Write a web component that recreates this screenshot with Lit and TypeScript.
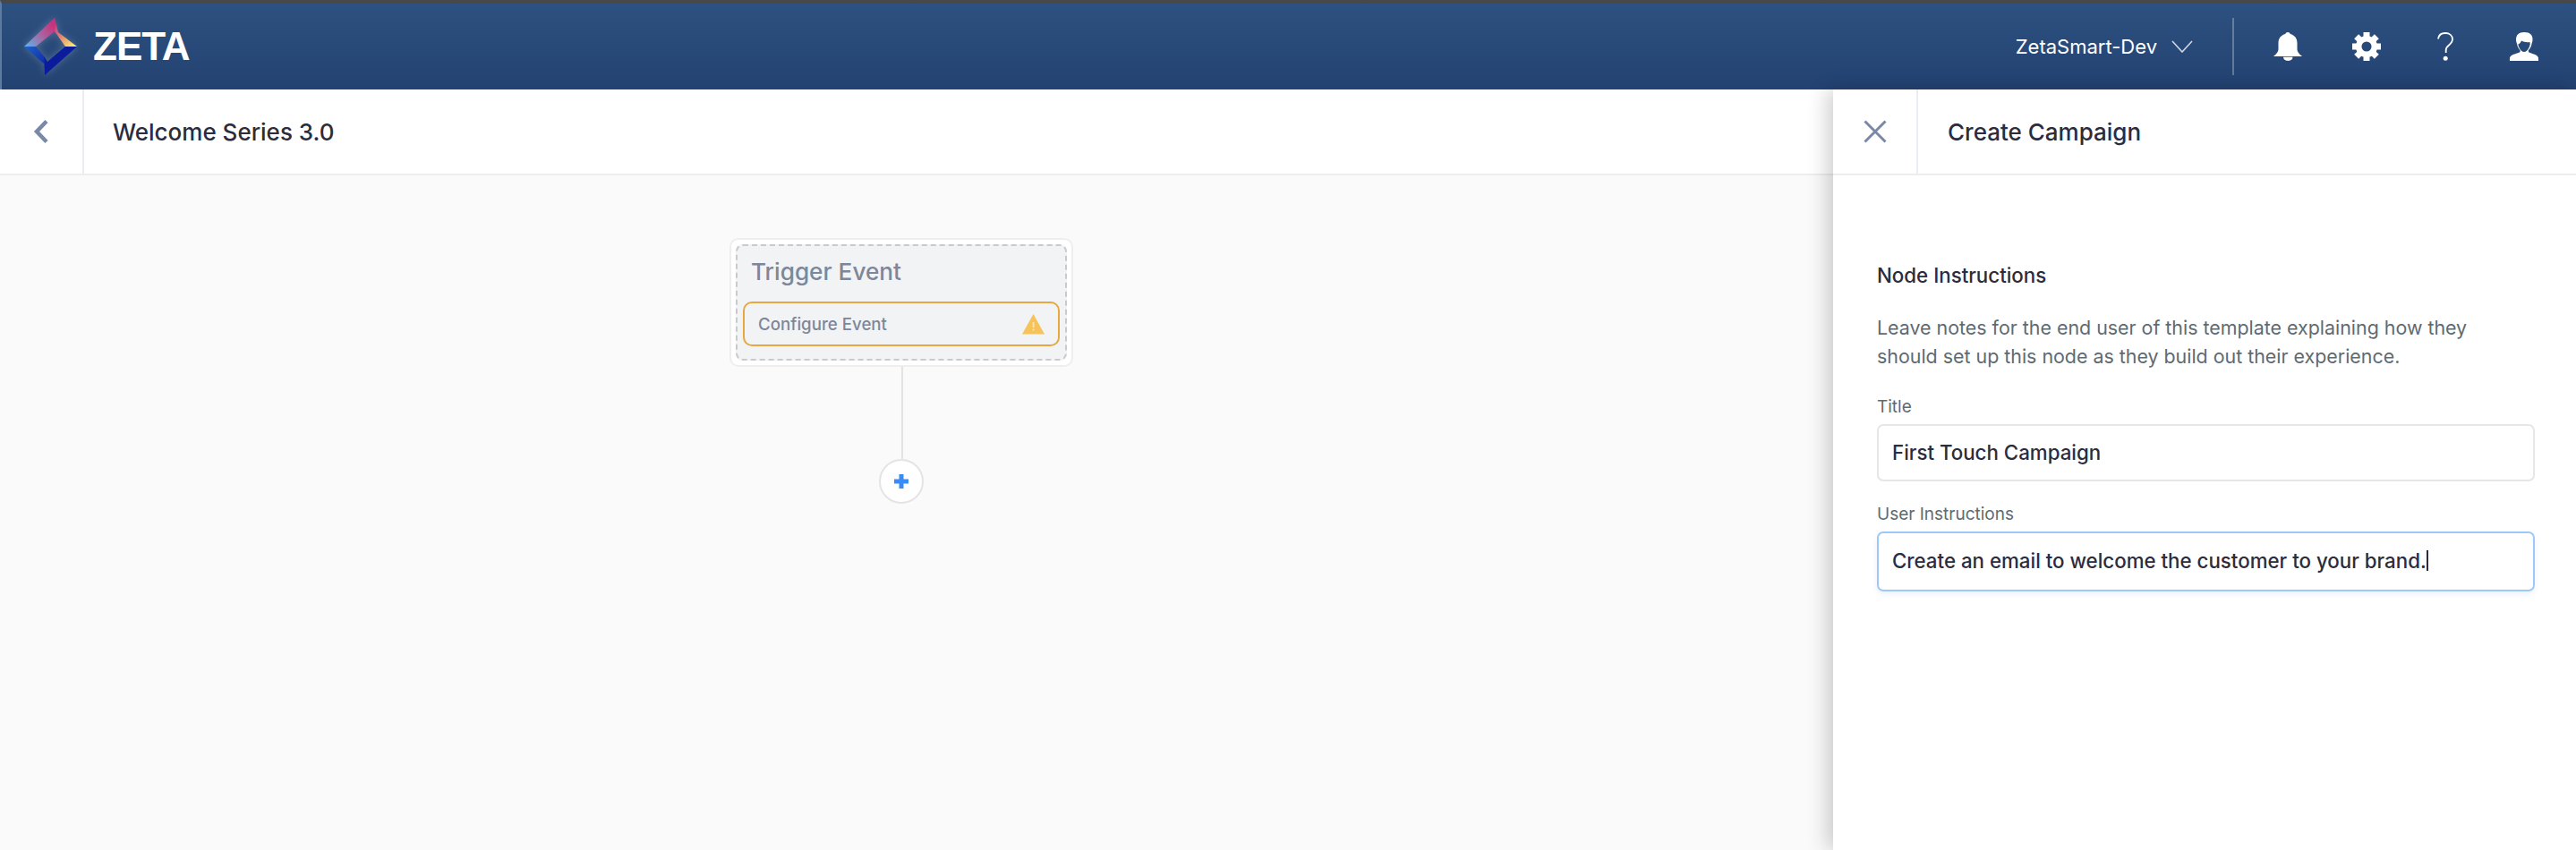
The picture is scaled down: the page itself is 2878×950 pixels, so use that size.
import { LitElement, html, svg, css } from "lit";
import { customElement } from "lit/decorators.js";

const teeth = [0, 45, 90, 135, 180, 225, 270, 315];

@customElement("app-root")
export class AppRoot extends LitElement {
  static styles = css`
    :host {
      display: block;
      position: relative;
      width: 100%;
      height: 950px;
      overflow: hidden;
      background: #fafafa;
      font-family: "Inter", "Liberation Sans", sans-serif;
      color: #2b2c3e;
    }
    .top {
      box-sizing: border-box;
      height: 100px;
      border-top: 4px solid #484848;
      border-left: 2px solid #5d7a9f;
      background: linear-gradient(#2d5180, #234272);
      display: flex;
      align-items: center;
      padding-left: 24px;
      padding-right: 42px;
    }
    .logo { width: 60px; height: 64px; flex: none; overflow: visible; filter: drop-shadow(0 0 4px rgba(255,255,255,.22)); }
    .brand {
      margin-left: 18px;
      font: 700 44px "Liberation Sans", sans-serif;
      letter-spacing: -1px;
      color: #fff;
      line-height: 1;
    }
    .spacer { flex: 1; }
    .account { color: #fff; font-size: 22px; }
    .chev { width: 24px; height: 14px; margin-left: 16px; flex: none; }
    .divider { width: 2px; height: 64px; margin-left: 44px; background: rgba(255,255,255,.28); flex: none; }
    .icons { display: flex; align-items: center; margin-left: 44px; }
    .icons svg { display: block; flex: none; fill: #fff; }
    .bell { width: 32px; height: 32px; }
    .gear { width: 32px; height: 32px; margin-left: 56px; }
    .help { width: 18px; height: 32px; margin-left: 63px; }
    .user { width: 32px; height: 32px; margin-left: 63px; }

    .sub {
      box-sizing: border-box;
      height: 96px;
      background: #fff;
      border-bottom: 2px solid #ededed;
      display: flex;
      align-items: stretch;
    }
    .cell {
      width: 94px;
      box-sizing: border-box;
      border-right: 2px solid #e9edf2;
      display: flex;
      align-items: center;
      justify-content: center;
      flex: none;
    }
    .cell svg { display: block; }
    .heading { font-size: 26px; font-weight: 500; align-self: center; padding-left: 32px; color: #2b2c3e; }

    .canvas { position: relative; height: 754px; background: #fafafa; }
    .node {
      position: absolute;
      left: 815px;
      top: 70px;
      width: 384px;
      height: 144px;
      box-sizing: border-box;
      background: #fff;
      border: 2px solid #eeeeee;
      border-radius: 10px;
      padding: 5px 5px;
    }
    .inner {
      box-sizing: border-box;
      height: 130px;
      background: #f2f3f5;
      border: 2px dashed #c9cacc;
      border-radius: 8px;
      padding: 0 6px;
    }
    .node-title {
      font-size: 26.2px;
      font-weight: 500;
      color: #7d8799;
      line-height: 58px;
      padding-left: 9px;
      height: 62px;
    }
    .cfg {
      box-sizing: border-box;
      height: 50px;
      border: 2px solid #e8a840;
      border-radius: 10px;
      display: flex;
      align-items: center;
      justify-content: space-between;
      padding: 0 15px;
      font-size: 18.7px;
      font-weight: 500;
      color: #7d8799;
    }
    .warn { width: 25px; height: 23px; display: block; }
    .line { position: absolute; left: 1007px; top: 214px; width: 2px; height: 103px; background: #e3e3e3; }
    .add {
      position: absolute;
      left: 982px;
      top: 317px;
      width: 50px;
      height: 50px;
      box-sizing: border-box;
      border: 2px solid #e4e4e4;
      border-radius: 50%;
      background: #fff;
      display: flex;
      align-items: center;
      justify-content: center;
    }
    .add svg { display: block; width: 16px; height: 16px; }

    .panel {
      position: absolute;
      left: 2048px;
      top: 100px;
      width: 830px;
      bottom: 0;
      background: #fff;
      box-shadow: -6px 0 22px rgba(0,0,0,.2);
    }
    .panel .cell { width: 95px; }
    .panel .heading { padding-left: 33px; }
    .form { padding: 0 46px 0 49px; }
    .form h3 { margin: 99px 0 0; font-size: 22.3px; font-weight: 500; line-height: 26px; color: #2b2c3e; }
    .desc { margin: 29px 0 0; font-size: 21.4px; line-height: 32px; color: #5e6b72; }
    .label { font-size: 19px; line-height: 22px; color: #5e6b72; margin-top: 30px; }
    .label.second { margin-top: 26px; }
    .input {
      box-sizing: border-box;
      height: 64px;
      margin-top: 8px;
      border: 2px solid #e6e6e6;
      border-radius: 7px;
      padding: 0 0 2px 15px;
      display: flex;
      align-items: center;
      font-size: 22.3px;
      font-weight: 500;
      color: #2b2c3e;
    }
    .input.focus {
      height: 67px;
      border-color: #9ec8f8;
      box-shadow: 0 3px 6px rgba(120,170,240,.15);
    }
    .caret { display: inline-block; width: 2px; height: 23px; background: #2b2c3e; flex: none; }
  `;

  render() {
    return html`
      <div class="top">
        <svg class="logo" viewBox="26 20 60 64">
          <defs>
            <linearGradient id="lg1" x1="27" y1="52" x2="61" y2="30" gradientUnits="userSpaceOnUse">
              <stop offset="0" stop-color="#58b8f0" /><stop offset="0.5" stop-color="#a06ea8" /><stop offset="1" stop-color="#c8327c" />
            </linearGradient>
            <linearGradient id="lg2" x1="60" y1="28" x2="84" y2="52" gradientUnits="userSpaceOnUse">
              <stop offset="0" stop-color="#c8327c" /><stop offset="1" stop-color="#fff56c" />
            </linearGradient>
            <linearGradient id="lg3" x1="28" y1="52" x2="52" y2="70" gradientUnits="userSpaceOnUse">
              <stop offset="0" stop-color="#1f63c8" /><stop offset="1" stop-color="#0f2aa6" />
            </linearGradient>
          </defs>
          <polygon points="27,52 61,20 61,35 40,52" fill="url(#lg1)" />
          <polygon points="61,20 65,36 86,52 73,52 61,35" fill="url(#lg2)" />
          <polygon points="86,52 50,84 49,63 53,69 73,52" fill="#0a1c9c" />
          <polygon points="27,52 40,52 49,63 50,72" fill="url(#lg3)" />
        </svg>
        <div class="brand">ZETA</div>
        <div class="spacer"></div>
        <div class="account">ZetaSmart-Dev</div>
        <svg class="chev" viewBox="0 0 24 14"><path d="M1 1l11 12L23 1" fill="none" stroke="#cfd8e4" stroke-width="1.6" /></svg>
        <div class="divider"></div>
        <div class="icons">
          <svg class="bell" viewBox="0 0 32 32">
            <path d="M16 0c-1.400 0-2.400.8-2.800 2C8.300 3.300 5.500 7 5.500 12v7c0 2.500-1.800 5-5 7.500L0 27h32l-.5-.5c-3.200-2.500-5-5-5-7.500v-7c0-5-2.800-8.700-7.700-10C18.400.8 17.400 0 16 0z" />
            <path d="M11 27.800h10.500c0 2.400-2.200 4.200-5.200 4.200S11 30.200 11 27.800z" />
          </svg>
          <svg class="gear" viewBox="0 0 32 32">
            <circle cx="16" cy="16" r="8.800" fill="none" stroke="#fff" stroke-width="6.500" />
            ${teeth.map((a) => svg`<rect x="12.500" y="0" width="7" height="7" transform="rotate(${a} 16 16)" />`)}
          </svg>
          <svg class="help" viewBox="0 0 18 32">
            <path d="M1 7.500C1.500 3.300 4.600 1 9 1c4.600 0 8 2.600 8 6.800 0 3.200-1.800 4.800-4 6.700-2.200 1.800-3.300 3.200-3.300 5.500v3" fill="none" stroke="#fff" stroke-width="1.800" />
            <circle cx="9.200" cy="29.300" r="2.500" />
          </svg>
          <svg class="user" viewBox="0 0 32 32">
            <path fill-rule="evenodd" d="M16 0c-6 0-9 3-9 8 0 2 .5 3.500 1 5 .6 3 2 5.500 3.500 7 .3 1 .2 1.800-.5 2.500C8 24 0 25 0 29v3h32v-3c0-4-8-5-10.500-6.500-.7-.7-.8-1.500-.5-2.500 1.500-1.500 3-4 3.500-7 .5-1.500 1-3 1-5 0-5-3-8-9-8zM9.500 13.500c2-1 3-2.500 3.500-4 2.500 1.500 6 2 9.500 1.500l.2 2.500c-.6 3-1.800 5.500-3.700 7.300-1 .8-2 1.200-3 1.200s-2-.4-3-1.200c-1.900-1.800-3.100-4.300-3.700-7.300z" />
          </svg>
        </div>
      </div>
      <div class="sub">
        <div class="cell">
          <svg width="18" height="28" viewBox="0 0 18 28"><path d="M15 2.500L4 14l11 11.500" fill="none" stroke="#7a88a8" stroke-width="4.500" /></svg>
        </div>
        <div class="heading">Welcome Series 3.0</div>
      </div>
      <div class="canvas">
        <div class="node">
          <div class="inner">
            <div class="node-title">Trigger Event</div>
            <div class="cfg">
              <span>Configure Event</span>
              <svg class="warn" viewBox="0 0 25 23">
                <path d="M12.500 0L25 22.500H0z" fill="#f5c35a" />
                <rect x="11.700" y="9" width="1.800" height="6" fill="#fbe3ad" />
                <rect x="11.700" y="16.500" width="1.800" height="2" fill="#fbe3ad" />
              </svg>
            </div>
          </div>
        </div>
        <div class="line"></div>
        <div class="add">
          <svg viewBox="0 0 16 16"><path d="M5.500 0h5v5.500H16v5h-5.500V16h-5v-5.500H0v-5h5.500z" fill="#3b8bf5" /></svg>
        </div>
      </div>
      <div class="panel">
        <div class="sub">
          <div class="cell">
            <svg width="26" height="26" viewBox="0 0 26 26"><path d="M1.500 1.500l23 23M24.500 1.500l-23 23" fill="none" stroke="#7a88a8" stroke-width="3" /></svg>
          </div>
          <div class="heading">Create Campaign</div>
        </div>
        <div class="form">
          <h3>Node Instructions</h3>
          <p class="desc">Leave notes for the end user of this template explaining how they<br />should set up this node as they build out their experience.</p>
          <div class="label">Title</div>
          <div class="input">First Touch Campaign</div>
          <div class="label second">User Instructions</div>
          <div class="input focus">Create an email to welcome the customer to your brand.<span class="caret"></span></div>
        </div>
      </div>
    `;
  }
}
